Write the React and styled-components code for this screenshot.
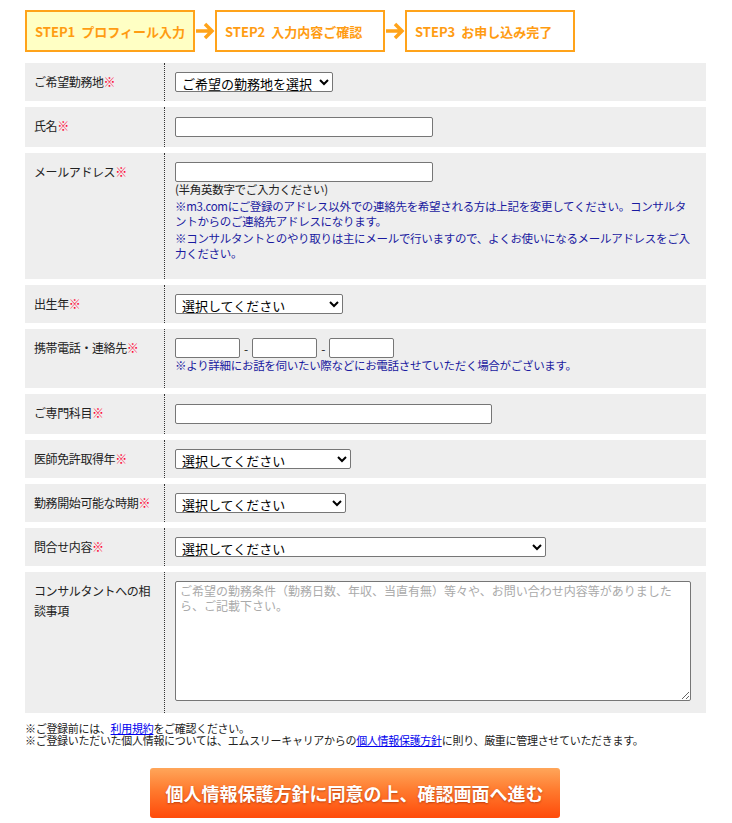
import React from 'react';
import styled, { createGlobalStyle } from 'styled-components';

const Global = createGlobalStyle`
  body { margin: 0; background: #fff; font-family: "Noto Sans CJK JP", "Liberation Sans", sans-serif; font-size: 12px; color: #222; }
`;

const Page = styled.div`
  padding: 10px 26px 10px 25px;
`;

const Steps = styled.div`
  display: flex;
  align-items: center;
  margin-bottom: 11px;
`;

const Step = styled.div`
  width: 170px;
  height: 42px;
  box-sizing: border-box;
  border: 2px solid #ffa31a;
  background: ${({ active }) => (active ? '#ffffc4' : '#fff')};
  color: #ff9c12;
  font-weight: bold;
  font-size: 13px;
  display: flex;
  align-items: center;
  padding-left: 8px;
  white-space: nowrap;
`;

const Arrow = styled.svg`
  width: 20px;
  height: 20px;
`;

const Table = styled.div`
  display: flex;
  flex-direction: column;
  gap: 6px;
`;

const Row = styled.div`
  display: grid;
  grid-template-columns: 140px 1fr;
  background: #eeeeee;
  height: ${({ h }) => h}px;
  overflow: hidden;
`;

const Label = styled.div`
  padding: 9px 6px 6px 9px;
  border-right: 1px dotted #333;
  line-height: 20px;
  letter-spacing: -0.4px;
`;

const Req = styled.span`
  color: #ff0033;
  font-weight: bold;
`;

const Field = styled.div`
  padding: ${({ top }) => (top ? '9px 10px' : '0 10px')};
  display: flex;
  flex-direction: column;
  justify-content: ${({ top }) => (top ? 'flex-start' : 'center')};
`;

const Input = styled.input`
  width: ${({ w }) => w}px;
  height: 20px;
  box-sizing: border-box;
  border: 1px solid #767676;
  border-radius: 2px;
  background: #fff;
`;

const Select = styled.select`
  width: ${({ w }) => w}px;
  height: 20px;
  font-size: 13px;
  line-height: 16px;
  font-family: inherit;
  padding: 0 2px;
  border: 1px solid #767676;
  border-radius: 2px;
  background: #fff;
  color: #000;
`;

const Note = styled.div`
  color: ${({ blue }) => (blue ? '#1a1aa0' : '#222')};
  font-size: 11.5px;
  line-height: 15px;
  letter-spacing: -0.3px;
  margin-top: ${({ mt }) => mt || 0}px;
`;

const TelRow = styled.div`
  display: flex;
  align-items: center;
  gap: 4px;
`;

const Area = styled.textarea`
  width: 516px;
  height: 120px;
  box-sizing: border-box;
  border: 1px solid #767676;
  border-radius: 2px;
  font-family: inherit;
  font-size: 12px;
  line-height: 15px;
  padding: 1px 4px;
  resize: both;
  &::placeholder { color: #aaa; }
`;

const Foot = styled.div`
  margin-top: 9px;
  line-height: 12px;
  font-size: 11px;
  letter-spacing: -0.3px;
  a { color: #0000ee; }
`;

const BtnWrap = styled.div`
  display: flex;
  justify-content: center;
  margin-top: 22px;
  padding-right: 22px;
`;

const Btn = styled.button`
  width: 410px;
  height: 50px;
  border: none;
  border-radius: 3px;
  background: linear-gradient(#ffa65a 0%, #ff7a2e 45%, #ff4a0a 100%);
  color: #fff;
  font-weight: bold;
  font-size: 18px;
  line-height: 22px;
  font-family: inherit;
  text-shadow: 0 1px 2px rgba(150,40,0,0.6);
`;

const ArrowIcon = () => (
  <Arrow viewBox="0 0 20 20">
    <path d="M1 10h15M10 3l7 7-7 7" stroke="#ffa31a" strokeWidth="3.5" fill="none" />
  </Arrow>
);

export default function App() {
  return (
    <Page>
      <Global />
      <Steps>
        <Step active>STEP1&nbsp; プロフィール入力</Step>
        <ArrowIcon />
        <Step>STEP2&nbsp; 入力内容ご確認</Step>
        <ArrowIcon />
        <Step>STEP3&nbsp; お申し込み完了</Step>
      </Steps>
      <Table>
        <Row h={38}>
          <Label>ご希望勤務地<Req>※</Req></Label>
          <Field><Select w={158}><option>ご希望の勤務地を選択</option></Select></Field>
        </Row>
        <Row h={40}>
          <Label>氏名<Req>※</Req></Label>
          <Field><Input w={258} /></Field>
        </Row>
        <Row h={126}>
          <Label>メールアドレス<Req>※</Req></Label>
          <Field top>
            <Input w={258} />
            <Note>(半角英数字でご入力ください)</Note>
            <Note blue mt={2}>※m3.comにご登録のアドレス以外での連絡先を希望される方は上記を変更してください。コンサルタントからのご連絡先アドレスになります。</Note>
            <Note blue mt={2}>※コンサルタントとのやり取りは主にメールで行いますので、よくお使いになるメールアドレスをご入力ください。</Note>
          </Field>
        </Row>
        <Row h={38}>
          <Label>出生年<Req>※</Req></Label>
          <Field><Select w={168}><option>選択してください</option></Select></Field>
        </Row>
        <Row h={59}>
          <Label>携帯電話・連絡先<Req>※</Req></Label>
          <Field top>
            <TelRow>
              <Input w={65} />-<Input w={65} />-<Input w={65} />
            </TelRow>
            <Note blue>※より詳細にお話を伺いたい際などにお電話させていただく場合がございます。</Note>
          </Field>
        </Row>
        <Row h={40}>
          <Label>ご専門科目<Req>※</Req></Label>
          <Field><Input w={317} /></Field>
        </Row>
        <Row h={38}>
          <Label>医師免許取得年<Req>※</Req></Label>
          <Field><Select w={176}><option>選択してください</option></Select></Field>
        </Row>
        <Row h={38}>
          <Label>勤務開始可能な時期<Req>※</Req></Label>
          <Field><Select w={171}><option>選択してください</option></Select></Field>
        </Row>
        <Row h={38}>
          <Label>問合せ内容<Req>※</Req></Label>
          <Field><Select w={371}><option>選択してください</option></Select></Field>
        </Row>
        <Row h={141}>
          <Label>コンサルタントへの相談事項</Label>
          <Field top>
            <Area placeholder="ご希望の勤務条件（勤務日数、年収、当直有無）等々や、お問い合わせ内容等がありましたら、ご記載下さい。" />
          </Field>
        </Row>
      </Table>
      <Foot>
        ※ご登録前には、<a href="#">利用規約</a>をご確認ください。<br />
        ※ご登録いただいた個人情報については、エムスリーキャリアからの<a href="#">個人情報保護方針</a>に則り、厳重に管理させていただきます。
      </Foot>
      <BtnWrap>
        <Btn>個人情報保護方針に同意の上、確認画面へ進む</Btn>
      </BtnWrap>
    </Page>
  );
}
